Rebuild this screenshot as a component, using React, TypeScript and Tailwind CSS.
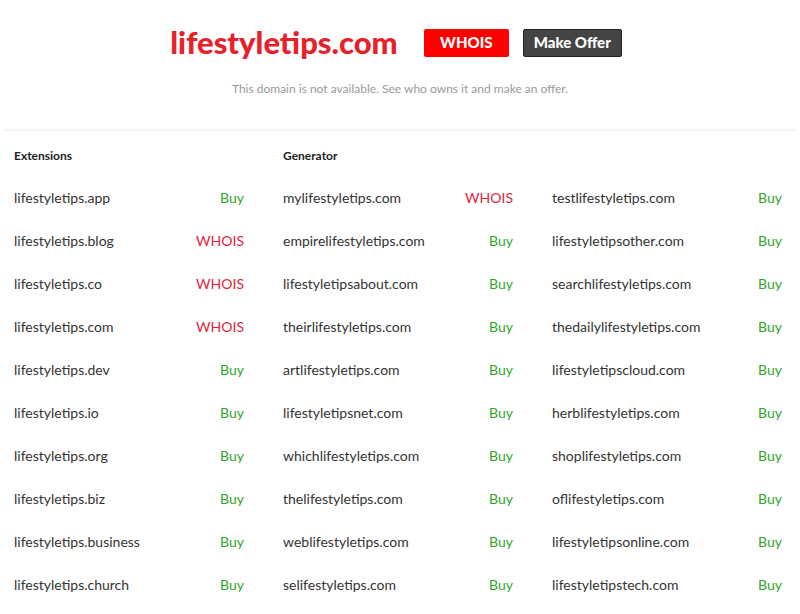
const extensions: [string, boolean][] = [
  ["lifestyletips.app", true],
  ["lifestyletips.blog", false],
  ["lifestyletips.co", false],
  ["lifestyletips.com", false],
  ["lifestyletips.dev", true],
  ["lifestyletips.io", true],
  ["lifestyletips.org", true],
  ["lifestyletips.biz", true],
  ["lifestyletips.business", true],
  ["lifestyletips.church", true],
];

const generatorA: [string, boolean][] = [
  ["mylifestyletips.com", false],
  ["empirelifestyletips.com", true],
  ["lifestyletipsabout.com", true],
  ["theirlifestyletips.com", true],
  ["artlifestyletips.com", true],
  ["lifestyletipsnet.com", true],
  ["whichlifestyletips.com", true],
  ["thelifestyletips.com", true],
  ["weblifestyletips.com", true],
  ["selifestyletips.com", true],
];

const generatorB: [string, boolean][] = [
  ["testlifestyletips.com", true],
  ["lifestyletipsother.com", true],
  ["searchlifestyletips.com", true],
  ["thedailylifestyletips.com", true],
  ["lifestyletipscloud.com", true],
  ["herblifestyletips.com", true],
  ["shoplifestyletips.com", true],
  ["oflifestyletips.com", true],
  ["lifestyletipsonline.com", true],
  ["lifestyletipstech.com", true],
];

function DomainColumn({ title, rows }: { title?: string; rows: [string, boolean][] }) {
  return (
    <div className="flex flex-col">
      <div className="h-[45px] pt-[16px] text-[12px] font-bold text-[#222]">{title ?? "\u00a0"}</div>
      {rows.map(([name, available]) => (
        <div key={name} className="flex h-[43px] items-center justify-between text-[14px] text-[#333]">
          <span>{name}</span>
          {available ? (
            <span className="text-[#2fa52a]">Buy</span>
          ) : (
            <span className="text-[#e0243a]">WHOIS</span>
          )}
        </div>
      ))}
    </div>
  );
}

export default function App() {
  return (
    <div className="min-h-[614px] bg-white" style={{ fontFamily: '"Lato", "Liberation Sans", sans-serif' }}>
      <header className="flex flex-col items-center pt-[27px]">
        <div className="flex items-center pr-[8px]">
          <h1 className="text-[31px] font-black leading-none text-[#e8202a]">lifestyletips.com</h1>
          <button className="ml-[26px] h-[28px] w-[85px] rounded-[2px] bg-[#ff0000] text-[15px] font-black text-white">
            WHOIS
          </button>
          <button className="ml-[14px] h-[28px] w-[99px] rounded-[2px] border border-[#222] bg-[#444] text-[15px] font-black text-white">
            Make Offer
          </button>
        </div>
        <p className="mt-[22px] text-[12px] text-[#999]">This domain is not available. See who owns it and make an offer.</p>
      </header>
      <div className="mx-[3px] mt-[31px] border-t-2 border-[#f5f5f5]" />
      <main className="grid grid-cols-3 gap-x-[39px] pl-[14px] pr-[18px]">
        <DomainColumn title="Extensions" rows={extensions} />
        <DomainColumn title="Generator" rows={generatorA} />
        <DomainColumn rows={generatorB} />
      </main>
    </div>
  );
}
